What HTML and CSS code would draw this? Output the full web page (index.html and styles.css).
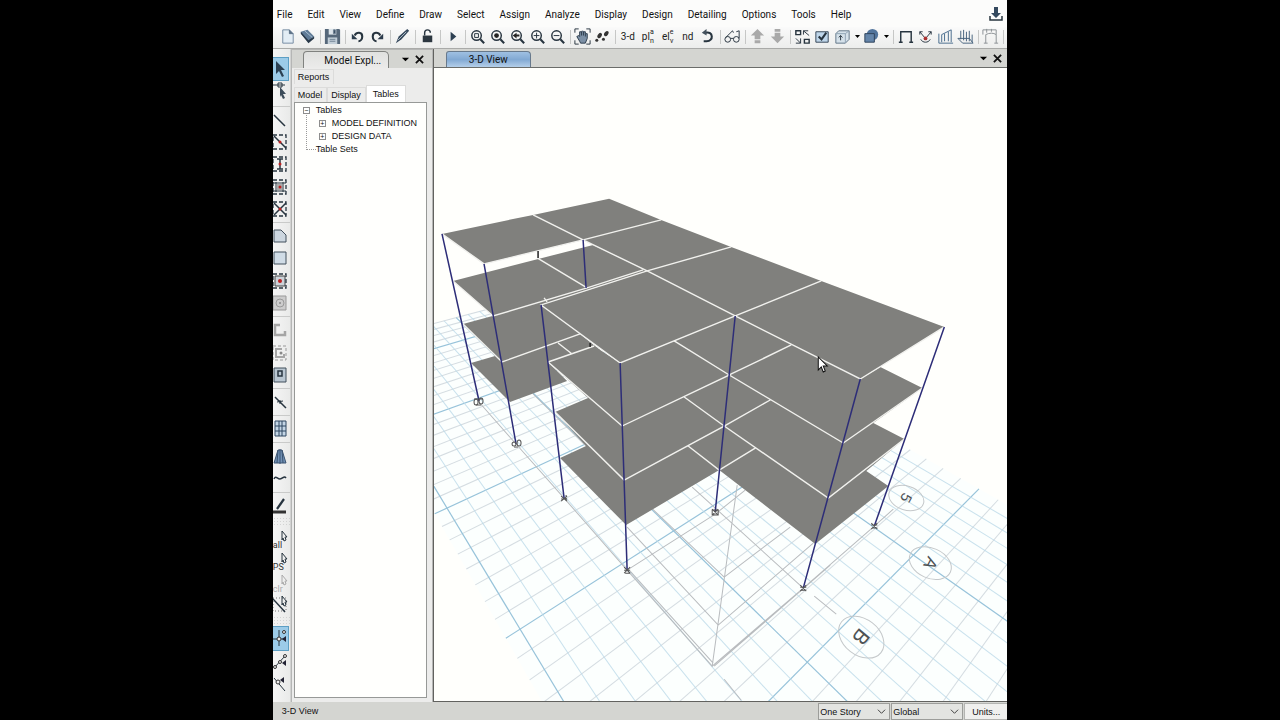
FILE: index.html
```
<!DOCTYPE html>
<html lang="en">
<head>
<meta charset="utf-8">
<title>3-D View</title>
<link rel="stylesheet" href="styles.css">
</head>
<body>
<div class="app">
  <nav class="menu">
    <button>File</button><button>Edit</button><button>View</button><button>Define</button><button>Draw</button><button>Select</button><button>Assign</button><button>Analyze</button><button>Display</button><button>Design</button><button>Detailing</button><button>Options</button><button>Tools</button><button>Help</button>
    <button class="download" aria-label="Download"><svg class="i" viewBox="0 0 20 20"><path d="M8 3h4v6h3l-5 5-5-5h3z" fill="#34495e"/><path d="M4 12v4h12v-4" class="s"/></svg></button>
  </nav>

  <div class="toolbar" role="toolbar" aria-label="Main">
    <button aria-label="New"><svg class="i" viewBox="0 0 20 20"><path d="M5 3h7l4 4v10H5z" fill="#e3edf5" stroke="#7389a0"/><path d="M12 3v4h4" fill="#5c7186" stroke="#5c7186"/></svg></button>
    <button aria-label="Open"><svg class="i" viewBox="0 0 20 20"><path d="M3 5l7-2 7 7-6 6-8-9z" fill="#607b97"/><path d="M3 7l8 10 6-5v-2l-6 4-8-9z" fill="#29394a"/><path d="M7 4l8 7" stroke="#a8bfd2"/></svg></button>
    <i class="sep"></i>
    <button aria-label="Save"><svg class="i" viewBox="0 0 20 20"><path d="M2 2h15l1 1v15H2z" fill="#56687a"/><path d="M6 2h8v6H6z" fill="#dce4ea"/><path d="M5 11h10v7H5z" fill="#c2ced8"/><path d="M11 3h2v4h-2zM7 13h6M7 15h6" fill="#34495e" stroke="#708294"/></svg></button>
    <i class="sep"></i>
    <button aria-label="Undo"><svg class="i" viewBox="0 0 20 20"><path d="M7 9c2-4 8-4 8 1 0 3-2 5-4 5" class="s w2"/><path d="M4 7v6h6z" fill="#2c3c4c"/></svg></button>
    <button aria-label="Redo"><svg class="i" viewBox="0 0 20 20"><path d="M13 9c-2-4-8-4-8 1 0 3 2 5 4 5" class="s w2"/><path d="M16 7v6h-6z" fill="#2c3c4c"/></svg></button>
    <i class="sep"></i>
    <button aria-label="Edit object"><svg class="i" viewBox="0 0 20 20"><path d="M3 17l3-7 9-8 2 2-8 9z" fill="#34475b"/><path d="M5 14L14 5" stroke="#b6c3ce"/></svg></button>
    <i class="sep"></i>
    <button aria-label="Lock"><svg class="i" viewBox="0 0 20 20"><path d="M7 9V6c0-4 6-4 6 0" class="s"/><path d="M5 9h10v7H5z" fill="#2c3740"/></svg></button>
    <i class="sep"></i>
    <button aria-label="Run"><svg class="i" viewBox="0 0 20 20"><path d="M8 5l6 5-6 5z" fill="#2d4052"/></svg></button>
    <i class="sep"></i>
    <button aria-label="Zoom window"><svg class="i" viewBox="0 0 20 20"><circle cx="9" cy="9" r="5" class="s"/><path d="M13 13l4 4" class="s w2"/><path d="M7 7h4v4H7z" class="s t"/></svg></button>
    <button aria-label="Zoom all"><svg class="i" viewBox="0 0 20 20"><circle cx="9" cy="9" r="5" class="s"/><path d="M13 13l4 4" class="s w2"/><circle cx="9" cy="9" r="2.5" fill="#222"/></svg></button>
    <button aria-label="Zoom previous"><svg class="i" viewBox="0 0 20 20"><circle cx="9" cy="9" r="5" class="s"/><path d="M13 13l4 4" class="s w2"/><path d="M5 9l4-3v2h3v2H9v2z" fill="#222"/></svg></button>
    <button aria-label="Zoom in"><svg class="i" viewBox="0 0 20 20"><circle cx="9" cy="9" r="5" class="s"/><path d="M13 13l4 4" class="s w2"/><path d="M6 9h6M9 6v6" class="s t"/></svg></button>
    <button aria-label="Zoom out"><svg class="i" viewBox="0 0 20 20"><circle cx="9" cy="9" r="5" class="s"/><path d="M13 13l4 4" class="s w2"/><path d="M6 9h6" class="s t"/></svg></button>
    <i class="sep"></i>
    <button aria-label="Pan"><svg class="i" viewBox="0 0 20 20"><path d="M2 6V2h4M14 2h4v4M18 14v4h-4M6 18H2v-4" class="s t"/><path d="M7 15l-3-5 2-1 1 1V5h2l1-1 1 1h2v2h2v5l-2 5H8z" fill="#7c90a6" stroke="#2c3c4c"/><path d="M9 5v4M11 5v4M13 7v3" stroke="#2c3c4c"/></svg></button>
    <button aria-label="Walk"><svg class="i" viewBox="0 0 20 20"><g fill="#333"><ellipse cx="14" cy="7" rx="2" ry="3" transform="rotate(35 14 7)"/><ellipse cx="7" cy="9" rx="2" ry="3" transform="rotate(35 7 9)"/><circle cx="4" cy="14" r="1.6"/><circle cx="11" cy="13" r="1.6"/></g></svg></button>
    <i class="sep"></i>
    <button class="word">3-d</button>
    <button class="word" aria-label="Plan">pl<span><b>a</b><b>n</b></span></button>
    <button class="word" aria-label="Elevation">el<span><b>e</b><b>v</b></span></button>
    <button class="word">nd</button>
    <button aria-label="Rotate"><svg class="i" viewBox="0 0 20 20"><path d="M8 6c8-2 9 9 1 9H6" class="s w2"/><path d="M9 2v7L4 6z" fill="#44525e"/></svg></button>
    <i class="sep"></i>
    <button aria-label="Display options"><svg class="i" viewBox="0 0 20 20"><circle cx="5" cy="13" r="3" class="s t"/><circle cx="14" cy="13" r="3" class="s t"/><path d="M8 12h3M3 11l7-7 1 2M17 12V4l-3 1" class="s t"/></svg></button>
    <i class="sep"></i>
    <button aria-label="Up"><svg class="i g" viewBox="0 0 20 20"><path d="M10 2l7 7h-4v4H7V9H3zM7 14h6v3H7z"/></svg></button>
    <button aria-label="Down"><svg class="i g" viewBox="0 0 20 20"><path d="M10 17l7-7h-4V6H7v4H3zM7 2h6v3H7z"/></svg></button>
    <i class="sep"></i>
    <button aria-label="Shrink"><svg class="i" viewBox="0 0 20 20"><path d="M3 4h5v4H3zM12 13h5v4h-5z" class="s"/><path d="M11 8V4h5M11 4l6 5M3 12l5 5M8 12v5H3" class="s t"/></svg></button>
    <button aria-label="Options"><svg class="i" viewBox="0 0 20 20"><path d="M3 5h13v11H3z" fill="#bfd6ea" stroke="#345"/><path d="M6 10l3 3 5-7" class="s w2"/></svg></button>
    <button aria-label="Box view"><svg class="i" viewBox="0 0 20 20"><path d="M3 7l3-3h11v9l-4 4H3z" fill="#d5e1ea" stroke="#5f7486"/><path d="M13 17V7l4-3M3 7h10" stroke="#8fa2b3" fill="none"/><path d="M8 9v5M6 11l2-2 2 2" class="s t"/></svg></button>
    <button class="caret" aria-label="More"><svg viewBox="0 0 9 9"><path d="M2 3h5L4.500 6z"/></svg></button>
    <button aria-label="Solid view"><svg class="i" viewBox="0 0 20 20"><circle cx="11" cy="8" r="6" fill="#51749c"/><path d="M3 7h10v9H3z" fill="#6485aa" stroke="#2c4058"/></svg></button>
    <button class="caret" aria-label="More"><svg viewBox="0 0 9 9"><path d="M2 3h5L4.500 6z"/></svg></button>
    <i class="sep"></i>
    <button aria-label="Undeformed"><svg class="i" viewBox="0 0 20 20"><path d="M5 16V5h11v11M3 16h4M14 16h4" class="s"/></svg></button>
    <button aria-label="Joint loads"><svg class="i" viewBox="0 0 20 20"><path d="M4 5l5 6M16 5l-5 6M4 5h3M4 5v3M16 5h-3M16 5v3M5 13c2 4 8 4 10 0" class="s t"/><circle cx="10" cy="12" r="2" fill="#a33"/></svg></button>
    <button aria-label="Frame loads"><svg class="i" viewBox="0 0 20 20"><path d="M3 17h15M3 17V7M6 16V8l10-5v13M9 15V7M13 15V5" stroke="#476a8c" fill="none"/></svg></button>
    <button aria-label="Shell loads"><svg class="i" viewBox="0 0 20 20"><path d="M2 12l5 5h11l-4-5zM5 4v9M8 3v11M11 5v10M14 4v11M17 8v8" stroke="#46617c" fill="none"/></svg></button>
    <i class="sep"></i>
    <button aria-label="Deformed"><svg class="i" viewBox="0 0 20 20"><path d="M5 17V8c4-2 8-2 11 0v9M3 17h4M14 17h4M2 3v5M6 2v4M11 2v3M16 3v5M2 3h14" stroke="#8a8f94" fill="none"/></svg></button>
    <i class="sep"></i>
  </div>

  <div class="work">
    <div class="rail" role="toolbar" aria-label="Drawing">
      <button class="on" aria-label="Select"><svg class="i" viewBox="0 0 16 20"><path d="M3 2l9 9H8l3 6-2 1-3-6-3 3z" fill="#2b4053"/></svg></button>
      <button aria-label="Reshape"><svg class="i" viewBox="0 0 16 20"><path d="M0 3h12M5 1h4v4H5z" class="s t"/><path d="M7 5l6 7h-3l2 4-2 1-2-4-1 2z" fill="#3c4c5a"/></svg></button>
      <i class="rule"></i>
      <button aria-label="Draw line"><svg class="i" viewBox="0 0 16 20"><path d="M1 5l11 11" class="s"/></svg></button>
      <button aria-label="Quick line"><svg class="i" viewBox="0 0 16 20"><path d="M0 3h13v14H0z" class="s d"/><path d="M1 4l12 12" class="s"/><circle cx="7" cy="10" r="1.5" fill="#b22"/></svg></button>
      <button aria-label="Quick column"><svg class="i" viewBox="0 0 16 20"><path d="M0 3h13v14H0z" class="s d"/><path d="M7 5v10M4 5h6M4 15h6" class="s"/><circle cx="7" cy="10" r="1.5" fill="#b22"/></svg></button>
      <button aria-label="Quick secondary"><svg class="i" viewBox="0 0 16 20"><path d="M0 3h13v14H0z" class="s d"/><path d="M3 5v10M10 5v10M0 6h13M0 14h13" class="s t"/><path d="M4 7h5v6H4z" fill="#aaa"/><circle cx="7" cy="10" r="1.5" fill="#b22"/></svg></button>
      <button aria-label="Quick brace"><svg class="i" viewBox="0 0 16 20"><path d="M0 3h13v14H0z" class="s d"/><path d="M1 4l12 12M13 4L1 16" class="s"/><circle cx="7" cy="10" r="1.5" fill="#b22"/></svg></button>
      <i class="rule"></i>
      <button aria-label="Draw floor"><svg class="i" viewBox="0 0 16 20"><path d="M1 4h7l5 5v7H1z" fill="#ccd6df" stroke="#42505d"/></svg></button>
      <button aria-label="Draw rectangle"><svg class="i" viewBox="0 0 16 20"><path d="M1 4h12v12H1z" fill="#d0dce6" stroke="#42505d"/></svg></button>
      <button aria-label="Quick floor"><svg class="i" viewBox="0 0 16 20"><path d="M2 5h10v10H2z" fill="#ccd3d9" stroke="#444"/><path d="M0 3h13v14H0z" class="s d"/><circle cx="7" cy="10" r="2" fill="#b22"/></svg></button>
      <button aria-label="Wall stack" disabled><svg class="i" viewBox="0 0 16 20"><path d="M0 3h13v14H0z" fill="#ccc" stroke="#999"/><circle cx="7" cy="10" r="4" fill="none" stroke="#999"/><circle cx="7" cy="10" r="1" fill="#888"/></svg></button>
      <i class="rule"></i>
      <button aria-label="Draw wall" disabled><svg class="i" viewBox="0 0 16 20"><path d="M7 5H2v10h10v-4" fill="none" stroke="#a5a5a5" stroke-width="2.5"/></svg></button>
      <button aria-label="Quick wall" disabled><svg class="i" viewBox="0 0 16 20"><path d="M0 3h13v14H0z" stroke="#999" stroke-dasharray="3 2" fill="none"/><path d="M9 6H3v8h8v-3" fill="none" stroke="#a5a5a5" stroke-width="2"/><circle cx="8" cy="10" r="1.5" fill="#888"/></svg></button>
      <button aria-label="Wall opening"><svg class="i" viewBox="0 0 16 20"><path d="M1 3h12v14H1z" fill="#b9c6d1" stroke="#42505d"/><path d="M5 6h4v5H5z" class="s"/></svg></button>
      <i class="rule"></i>
      <button aria-label="Draw link"><svg class="i" viewBox="0 0 16 20"><path d="M2 5l11 11" class="s"/><path d="M4 10l6-1M7 8v4" class="s t"/></svg></button>
      <i class="rule"></i>
      <button aria-label="Grid"><svg class="i" viewBox="0 0 16 20"><path d="M2 2h11v15H2zM6 2v15M9 2v15M2 7h11M2 12h11" fill="#c3d5e5" stroke="#2e4661"/></svg></button>
      <i class="rule"></i>
      <button aria-label="Tower"><svg class="i" viewBox="0 0 16 20"><path d="M5 3h4l4 13H1z" fill="#7191b5" stroke="#3b5370"/><path d="M7 2v15M5 3L4 16M9 3l1 13" stroke="#3b5370"/></svg></button>
      <button aria-label="Tendon"><svg class="i" viewBox="0 0 16 20"><path d="M1 10c2-4 3 0 6 0s4-4 6-1" class="s"/></svg></button>
      <i class="rule"></i>
      <button aria-label="Design strip"><svg class="i" viewBox="0 0 16 20"><path d="M0 16h13" stroke="#333" stroke-width="3"/><path d="M4 13l7-10" class="s w2"/></svg></button>
      <i class="grip"></i>
      <button class="sel" aria-label="Select all">all<svg class="i" viewBox="0 0 16 20"><path d="M9 1l5 6h-2l1 3-2 1-1-3-1 2z" class="s t"/></svg></button>
      <button class="sel" aria-label="Previous selection">PS<svg class="i" viewBox="0 0 16 20"><path d="M9 1l5 6h-2l1 3-2 1-1-3-1 2z" class="s t"/></svg></button>
      <button class="sel" aria-label="Clear selection" disabled>clr<svg class="i" viewBox="0 0 16 20"><path d="M9 1l5 6h-2l1 3-2 1-1-3-1 2z" stroke="#aaa" fill="none"/></svg></button>
      <button aria-label="Select by line"><svg class="i" viewBox="0 0 16 20"><path d="M0 3h13v13H0z" stroke="#777" stroke-dasharray="1 2" fill="none"/><path d="M0 4l12 13" class="s"/><path d="M9 1l5 6h-2l1 3-2 1-1-3-1 2z" class="s t"/></svg></button>
      <i class="grip"></i>
      <button class="on" aria-label="Snap to grid"><svg class="i" viewBox="0 0 16 20"><path d="M0 11h13M6 2v16" class="s t"/><circle cx="6" cy="11" r="2" fill="#eee" stroke="#333"/><circle cx="11" cy="4" r="1.5" fill="#eee" stroke="#333"/><path d="M13 8v6l-4-3z" fill="#223"/></svg></button>
      <button aria-label="Snap to ends"><svg class="i" viewBox="0 0 16 20"><path d="M1 16L12 4" class="s t"/><circle cx="2" cy="15" r="1.5" fill="#eee" stroke="#333"/><circle cx="7" cy="10" r="1.5" fill="#eee" stroke="#333"/><circle cx="12" cy="4" r="1.5" fill="#eee" stroke="#333"/><path d="M13 8v6l-4-3z" fill="#223"/></svg></button>
      <button aria-label="Snap to midpoint"><svg class="i" viewBox="0 0 16 20"><path d="M1 4l11 13" class="s t"/><circle cx="5" cy="8" r="2" fill="#eee" stroke="#333"/><path d="M11 3v6L7 6z" fill="#223"/></svg></button>
    </div>

    <aside class="explorer">
      <header class="bar"><button class="title">Model Expl...</button><button class="tiny" aria-label="Menu"><svg viewBox="0 0 10 10"><path d="M1 3h8L5 7z"/></svg></button><button class="tiny" aria-label="Close"><svg viewBox="0 0 10 10"><path d="M1 1l8 8M9 1L1 9" stroke="#111" stroke-width="2"/></svg></button></header>
      <div class="tabs"><button>Reports</button></div>
      <div class="tabs second"><button>Model</button><button>Display</button><button class="active">Tables</button></div>
      <div class="tree">
        <ul>
          <li><button class="box" aria-label="Collapse">−</button>Tables
            <ul>
              <li><button class="box" aria-label="Expand">+</button>MODEL DEFINITION</li>
              <li><button class="box" aria-label="Expand">+</button>DESIGN DATA</li>
            </ul>
          </li>
          <li class="leaf">Table Sets</li>
        </ul>
      </div>
    </aside>

    <main class="view">
      <header class="bar"><button class="doc">3-D View</button><span class="fill"></span><button class="tiny" aria-label="Window list"><svg viewBox="0 0 10 10"><path d="M1 3h8L5 7z"/></svg></button><button class="tiny" aria-label="Close view"><svg viewBox="0 0 10 10"><path d="M1 1l8 8M9 1L1 9" stroke="#111" stroke-width="2"/></svg></button></header>
      <div class="stage">
      <svg class="scene" viewBox="434 68 573 633" preserveAspectRatio="xMidYMid slice" role="img" aria-label="Four storey frame with slabs">
        <g id="ground"></g>
        <g class="plan">
          <path d="M478 401L516 444 564 498 627 570 712 666 803 588 874 526 893 509M692 487L803 588M627 570L715 514 745 490M533 394L583 443 724 577 790 527M627 527L718 625 813 543M712 666L737 485M630 571L713 663M714 666L830 565M814 596L836 614M604 436L583 443M724 679L741 700"/>
        </g>
        <g class="marker">
          <ellipse cx="906" cy="498" rx="18" ry="12" transform="rotate(18 906 498)"/>
          <ellipse cx="930" cy="563" rx="22" ry="15" transform="rotate(24 930 563)"/>
          <ellipse cx="861" cy="637" rx="25" ry="18" transform="rotate(38 861 637)"/>
          <text x="906" y="498" font-size="15" transform="rotate(118 906 498)">5</text>
          <text x="930" y="563" font-size="17" transform="rotate(118 930 563)">A</text>
          <text x="861" y="637" font-size="21" transform="rotate(130 861 637)">B</text>
        </g>
        <g class="slab">
          <path d="M463 324L541 303 600 350 548 362 567 381 510 402 471 363 495 356Z"/>
          <path d="M453 281L593 245 647 271 541 305 493 316Z"/>
          <path d="M548 362L594 346 620 363 735 316 860 379 880 367 922 388 873 423 904 439 866 471 888 486 815 544 719 470 626 525 560 458 586 446 555 412 588 398Z"/>
          <path d="M442 234L533 215 609 199 661 220 731 247 821 281 944 327 860 379 735 316 620 363 541 305 647 271 583 240 484 264Z"/>
        </g>
        <g class="beam">
          <path d="M533 215L583 240 647 271 735 316 860 379 944 327M661 220L583 240 484 264 442 234M731 247L647 271 541 305 620 363 735 316 821 281"/>
          <path d="M453 281L493 316 587 288 643 270M537 258L587 288M547 302L544 298M463 324L502 362 580 334M558 343L572 354M548 362L594 346M548 362L622 426 729 375 843 443 922 388M729 375L791 345M674 341L729 375M555 412L624 480 724 426 828 498 904 439M724 426L770 400M684 397L724 426M688 446L719 470 755 448"/>
        </g>
        <g class="column">
          <path d="M442 234L479 401M484 264L516 444M541 305L564 498M620 363L627 570M735 316L715 512M860 379L803 588M944 327L874 526M583 240L586 288"/>
          <path d="M538 251V258M590 343V347" stroke="#222"/>
        </g>
        <g class="support">
          <ellipse cx="476" cy="402" rx="2" ry="3"/><ellipse cx="481" cy="401" rx="2" ry="3"/><path d="M474 399h9M476 405h5"/>
          <ellipse cx="514" cy="444" rx="2" ry="2"/><ellipse cx="519" cy="443" rx="2" ry="3"/><path d="M514 447h4"/>
          <path d="M561 496l6 5M561 501l6-5M561 499h6M566 495v6"/><path d="M624 567l6 6M624 573l6-6M624 570h6M625 573h5"/>
          <path d="M712 509l6 6M712 515l6-6M712 510h6v5h-6z"/><path d="M800 585l6 6M800 591l6-6M800 587h6M801 590h5"/><path d="M871 523l6 6M871 529l6-6M871 525h6M872 528h5"/>
        </g>
        <path d="M818 357v13l3-3 2 5 2-1-2-5h4z" fill="#fff" stroke="#111"/>
      </svg>
      </div>
    </main>
  </div>

  <footer class="status">
    <span class="name">3-D View</span>
    <label class="combo"><select aria-label="Story scope"><option>One Story</option></select><svg viewBox="0 0 10 10"><path d="M1 3l4 4 4-4"/></svg></label>
    <label class="combo"><select aria-label="Coordinate system"><option>Global</option></select><svg viewBox="0 0 10 10"><path d="M1 3l4 4 4-4"/></svg></label>
    <button class="units">Units...</button>
  </footer>
</div>
<script src="grid.js"></script>
</body>
</html>
```
FILE: styles.css
```
* { box-sizing: border-box; }
body { margin: 0; background: #000; font: 9px "Liberation Sans", Arial, sans-serif; color: #111; }
button { margin: 0; padding: 0; border: 0; background: none; font: inherit; color: inherit; }
.app { width: min(100%, 102vh); height: 100vh; margin: 0 auto; display: flex; flex-direction: column; background: #e9eae8; overflow: hidden; }
.menu { display: flex; align-items: center; gap: 15px; height: 27px; padding: 1px 1px 0 4px; background: #fcfcfb; font: 10px Roboto, sans-serif; flex: none; white-space: nowrap; }
.download { margin-left: auto; height: 20px; }
.i { width: 20px; height: 20px; display: block; flex: none; overflow: visible; }
.s { fill: none; stroke: #27343f; stroke-width: 1.5; }
.s.t { stroke-width: 1; }
.s.w2 { stroke-width: 2.2; }
.s.d { stroke-width: 1.3; stroke-dasharray: 4 2; }
.g { fill: #a9a9a9; }
.toolbar { display: flex; align-items: center; height: 22px; padding: 0 0 2px 5px; background: linear-gradient(#fafafa, #ecedec); border-bottom: 1px solid #a9aaa8; flex: none; overflow: hidden; }
.toolbar .i { width: 19px; height: 19px; margin: 0 auto; }
.toolbar button { width: 20px; height: 19px; flex: none; }
.toolbar .caret { width: 9px; display: grid; place-items: center; }
.caret svg { width: 9px; height: 9px; }
.sep { width: 5px; height: 14px; flex: none; background: linear-gradient(#c6c7c6, #c6c7c6) 2px 0 / 1px 100% no-repeat; }
.toolbar .word { display: flex; align-items: center; justify-content: center; font: 10px Roboto, sans-serif; color: #222; }
.word span { display: grid; }
.word b { font: 7px/9px Roboto, sans-serif; }

.work { flex: 1; min-height: 0; display: flex; }
.rail { width: 18px; flex: none; display: flex; flex-direction: column; padding: 8px 0 7px; border-right: 1px solid #d2d3d2; background: linear-gradient(90deg, #f5f5f5, #e9eae9); overflow: hidden; }
.rail button { flex: 45 1 0; min-height: 0; width: 16px; display: flex; align-items: center; overflow: hidden; }
.rail .i { width: 16px; height: 20px; }
.rail .on { background: #9ccbe8; border: 1px solid #5d9fc4; border-left: 0; }
.rule { flex: 10 1 0; background: linear-gradient(#c9cac9, #c9cac9) 0 50% / 100% 1px no-repeat; }
.grip { flex: 20 1 0; background: radial-gradient(#aaa 1px, #0000 1px) 0 0 / 3px 3px; opacity: .4; }
.rail .sel { display: grid; align-items: end; font: 9px Roboto, sans-serif; color: #333; text-align: left; }
.rail .sel:disabled { color: #aaa; }
.sel .i { position: absolute; }

.explorer { width: 142px; flex: none; display: flex; flex-direction: column; border: 1px solid #b5b6b5; border-width: 1px 1px 0 1px; background: #ececeb; padding-bottom: 4px; }
.bar { display: flex; align-items: flex-end; height: 19px; flex: none; background: #d4d5d1; }
.explorer .bar { height: 18px; }
.title { height: 17px; width: 86px; margin: 0 10px 0 11px; padding-left: 14px; border: 1px solid #80827f; border-bottom: 0; border-radius: 4px 5px 0 0; background: linear-gradient(#e0e1df, #ebebea); font: 10px Roboto, sans-serif; }
.tiny { width: 14px; height: 17px; display: grid; place-items: center; flex: none; }
.tiny svg { width: 9px; height: 9px; }
.tabs { display: flex; height: 17px; padding: 1px 0 0 2px; align-items: flex-start; flex: none; }
.tabs button { height: 15px; padding: 0 4px 0 3px; border: 1px solid #dcdcdb; border-bottom: 0; }
.tabs.second { height: 17px; padding-top: 0; align-items: flex-end; }
.tabs.second button { padding-bottom: 1px; }
.tabs .active { background: #fff; height: 17px; padding: 0 6px 2px; }
.tree { flex: 1; margin: 0 5px 0 2px; border: 1px solid #979997; background: #fffffd; padding: 1px 0 0 7px; line-height: 13px; }
.tree ul { list-style: none; margin: 0; padding: 0; }
.tree ul ul { padding-left: 16px; }
.tree .box { width: 7px; height: 7px; margin: 0 6px 0 1px; border: 1px solid #8d8d8d; background: #fff; font: 7px/5px "Liberation Sans", sans-serif; vertical-align: 0; }
.leaf::before { content: ""; display: inline-block; width: 9px; height: 34px; margin: -30px 0 6px 4px; border-left: 1px dotted #999; border-bottom: 1px dotted #999; vertical-align: bottom; }

.view { flex: 1; min-width: 0; display: flex; flex-direction: column; border: 1px solid #62625f; border-width: 0 0 1px 1px; background: #fffffc; }
.view .bar { border-bottom: 1px solid #6b6d6a; padding: 0 3px 0 12px; }
.doc { height: 16px; width: 85px; border: 1px solid #67798c; border-bottom: 0; border-radius: 3px 4px 0 0; background: linear-gradient(#9fc0e2, #82a9d3 50%, #b4cfe9); font: 10px Roboto, sans-serif; }
.fill { flex: 1; }
.stage { flex: 1; min-height: 0; }
.scene { width: 100%; height: 100%; display: block; }
.ground-fill { fill: #fcfffe; }
.minor { fill: none; stroke: #cbd3d9; stroke-width: 1; opacity: .8; }
.minor.cool { stroke: #bbdae8; }
.major { fill: none; stroke: #97c3da; stroke-width: 1.2; }
.plan { fill: none; stroke: #b9bcbf; stroke-width: 1; }
.marker { fill: none; stroke: #c4c8ca; }
.marker text { fill: #4e5254; stroke: none; text-anchor: middle; dominant-baseline: central; font-family: "Liberation Sans", sans-serif; }
.slab { fill: #80807d; }
.beam { fill: none; stroke: #f1f1ee; stroke-width: 1.4; }
.column { fill: none; stroke: #2d2d78; stroke-width: 1.5; }
.support { fill: none; stroke: #555; stroke-width: 1; }

.status { height: 18px; flex: none; display: flex; align-items: stretch; background: #d4d5d1; padding-top: 1px; }
.name { flex: 1; padding-left: 9px; line-height: 17px; }
.combo { display: grid; align-items: center; width: 72px; margin-right: 1px; border: 1px solid #9c9d9a; background: #e3e4e1; }
.combo select, .combo svg { grid-area: 1 / 1; }
.combo select { appearance: none; width: 100%; height: 14px; padding: 0 1px; border: 0; background: none; font: inherit; color: inherit; }
.combo svg { width: 9px; height: 9px; justify-self: end; margin-right: 3px; fill: none; stroke: #333; pointer-events: none; }
.units { width: 43px; border: 1px solid #b3b4b1; border-right: 0; background: #f0f0ee; }
```
FILE: grid.js
```
// Ground grid: unit cells mapped to the view by a perspective transform.
const cell = [[0, 0], [0, 8], [8, 16], [16, 16]];
const point = [[447, 508], [520, 629], [807, 662], [913, 555]];

function solve(m) {
  const n = m.length;
  for (let c = 0; c < n; c++) {
    let p = c;
    for (let r = c + 1; r < n; r++) if (Math.abs(m[r][c]) > Math.abs(m[p][c])) p = r;
    [m[c], m[p]] = [m[p], m[c]];
    for (let r = 0; r < n; r++) {
      if (r === c) continue;
      const f = m[r][c] / m[c][c];
      for (let k = c; k <= n; k++) m[r][k] -= f * m[c][k];
    }
  }
  return m.map((row, i) => row[n] / row[i]);
}

const rows = [];
cell.forEach(([u, v], i) => {
  const [x, y] = point[i];
  rows.push([u, v, 1, 0, 0, 0, -u * x, -v * x, x]);
  rows.push([0, 0, 0, u, v, 1, -u * y, -v * y, y]);
});
const h = solve(rows);

function project(u, v) {
  const w = h[6] * u + h[7] * v + 1;
  return ((h[0] * u + h[1] * v + h[2]) / w).toFixed(1) + " " + ((h[3] * u + h[4] * v + h[5]) / w).toFixed(1);
}

const ground = document.getElementById("ground");
function add(d, name) {
  const path = document.createElementNS("http://www.w3.org/2000/svg", "path");
  path.setAttribute("d", d);
  path.setAttribute("class", name);
  ground.append(path);
}

const uMin = -0.6, uMax = 23, vMin = -20, vMax = 26;
add("M" + [[uMin, vMin], [uMax, vMin], [uMax, vMax], [uMin, vMax]].map(p => project(...p)).join("L") + "Z", "ground-fill");
for (let v = vMin; v <= vMax; v++) add("M" + project(uMin, v) + "L" + project(uMax, v), v % 8 ? "minor" : "major");
for (let u = 0; u < uMax; u++) add("M" + project(u, vMin) + "L" + project(u, vMax), u % 8 ? "minor cool" : "major");
```
